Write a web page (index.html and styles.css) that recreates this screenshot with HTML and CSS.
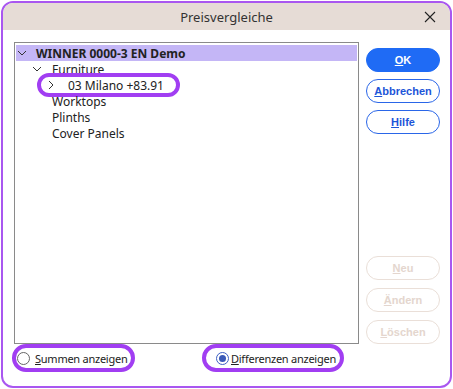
FILE: index.html
```html
<!DOCTYPE html>
<html lang="de">
<head>
    <meta charset="UTF-8">
    <title>Preisvergleiche</title>
    <link rel="stylesheet" href="styles.css">
</head>
<body>
    <div class="dialog">
        <div class="titlebar">
            <span class="title">Preisvergleiche</span>
            <svg class="close" width="12" height="12" viewBox="0 0 12 12">
                <path d="M1 1 L11 11 M11 1 L1 11" stroke="#222" stroke-width="1.1" fill="none"/>
            </svg>
        </div>
        <div class="content">
            <div class="main">
                <div class="tree">
                    <div class="row selected">
                        <svg class="chev" width="20" height="16" viewBox="0 0 20 16">
                            <path d="M2 6 L6 10 L10 6" stroke="#333" stroke-width="1" fill="none"/>
                        </svg>
                        <b>WINNER 0000-3 EN Demo</b>
                    </div>
                    <div class="row level1">
                        <svg class="chev" width="20" height="16" viewBox="0 0 20 16">
                            <path d="M1 6 L5 10 L9 6" stroke="#333" stroke-width="1" fill="none"/>
                        </svg>
                        Furniture
                    </div>
                    <div class="row">
                        <span class="mark item">
                            <svg class="chev" width="20" height="16" viewBox="0 0 20 16">
                                <path d="M1 4 L5 8 L1 12" stroke="#333" stroke-width="1" fill="none"/>
                            </svg>
                            03 Milano +83.91
                        </span>
                    </div>
                    <div class="row leaf">Worktops</div>
                    <div class="row leaf">Plinths</div>
                    <div class="row leaf">Cover Panels</div>
                </div>
                <div class="buttons">
                    <div class="group">
                        <button class="btn primary"><u>O</u>K</button>
                        <button class="btn"><u>A</u>bbrechen</button>
                        <button class="btn"><u>H</u>ilfe</button>
                    </div>
                    <div class="group">
                        <button class="btn" disabled><u>N</u>eu</button>
                        <button class="btn" disabled><u>Ä</u>ndern</button>
                        <button class="btn" disabled><u>L</u>öschen</button>
                    </div>
                </div>
            </div>
            <div class="options">
                <label class="option mark sums">
                    <span class="radio"></span>
                    <span class="label-text"><u>S</u>ummen anzeigen</span>
                </label>
                <label class="option mark diffs">
                    <span class="radio checked"></span>
                    <span class="label-text"><u>D</u>ifferenzen anzeigen</span>
                </label>
            </div>
        </div>
    </div>
</body>
</html>
```

FILE: styles.css
```css
body {
    margin: 0;
    padding: 1px;
    background: #ffffff;
    font-family: "Noto Sans", sans-serif;
    font-size: 12px;
    color: #222;
}
.dialog {
    width: 451px;
    height: 387px;
    box-sizing: border-box;
    border: 2px solid #a957f0;
    border-radius: 12px;
    overflow: hidden;
    background: #ffffff;
}
.titlebar {
    height: 27px;
    background: #e6dcd6;
    display: flex;
    align-items: center;
    justify-content: center;
    position: relative;
}
.title {
    font-size: 13px;
    color: #333;
}
.close {
    position: absolute;
    right: 14px;
    top: 8px;
}
.content {
    padding: 12px 0 0 11px;
}
.main {
    display: flex;
    gap: 7px;
}
.tree {
    width: 345px;
    height: 302px;
    box-sizing: border-box;
    border: 1px solid #8a8a8a;
    padding: 2px 1px;
}
.row {
    height: 16px;
    display: flex;
    align-items: center;
    white-space: nowrap;
}
.row.selected {
    background: #c4b6f6;
}
.row.level1 {
    padding-left: 16px;
}
.row.leaf {
    padding-left: 36px;
}
.chev {
    flex: none;
}
.item {
    margin-left: 25px;
    width: 128px;
    height: 16px;
    padding-left: 7px;
    display: flex;
    align-items: center;
}
.mark {
    outline: 4px solid #a13ef2;
    border-radius: 10px;
}
.buttons {
    width: 74px;
    padding-top: 6px;
    display: flex;
    flex-direction: column;
    justify-content: space-between;
}
.group {
    display: flex;
    flex-direction: column;
    gap: 7px;
}
.group + .group {
    gap: 8px;
}
.btn {
    height: 24px;
    border: 1px solid #2a66e8;
    border-radius: 12px;
    background: #ffffff;
    color: #1d55d8;
    font-family: "Liberation Sans", Arial, sans-serif;
    font-weight: bold;
    font-size: 11px;
    padding: 0;
}
.btn.primary {
    background: #1f6bf5;
    border-color: #1f6bf5;
    color: #ffffff;
}
.btn:disabled {
    border-color: #eadfd8;
    color: #e4d6ce;
}
.options {
    display: flex;
    padding-top: 4px;
}
.option {
    height: 20px;
    display: flex;
    align-items: center;
    box-sizing: border-box;
    white-space: nowrap;
    font-size: 11px;
    letter-spacing: -0.25px;
}
.label-text {
    flex: none;
}
.sums {
    margin-left: 2px;
    width: 115px;
    padding-left: 1px;
    gap: 5px;
}
.diffs {
    margin-left: 75px;
    width: 134px;
    padding-left: 10px;
    gap: 2px;
}
.radio {
    flex: none;
    width: 13px;
    height: 13px;
    box-sizing: border-box;
    border: 1px solid #666;
    border-radius: 50%;
    display: flex;
    align-items: center;
    justify-content: center;
}
.radio.checked {
    border-color: #3d5fc4;
}
.radio.checked::after {
    content: "";
    width: 7px;
    height: 7px;
    border-radius: 50%;
    background: #3b5ab8;
}
```
